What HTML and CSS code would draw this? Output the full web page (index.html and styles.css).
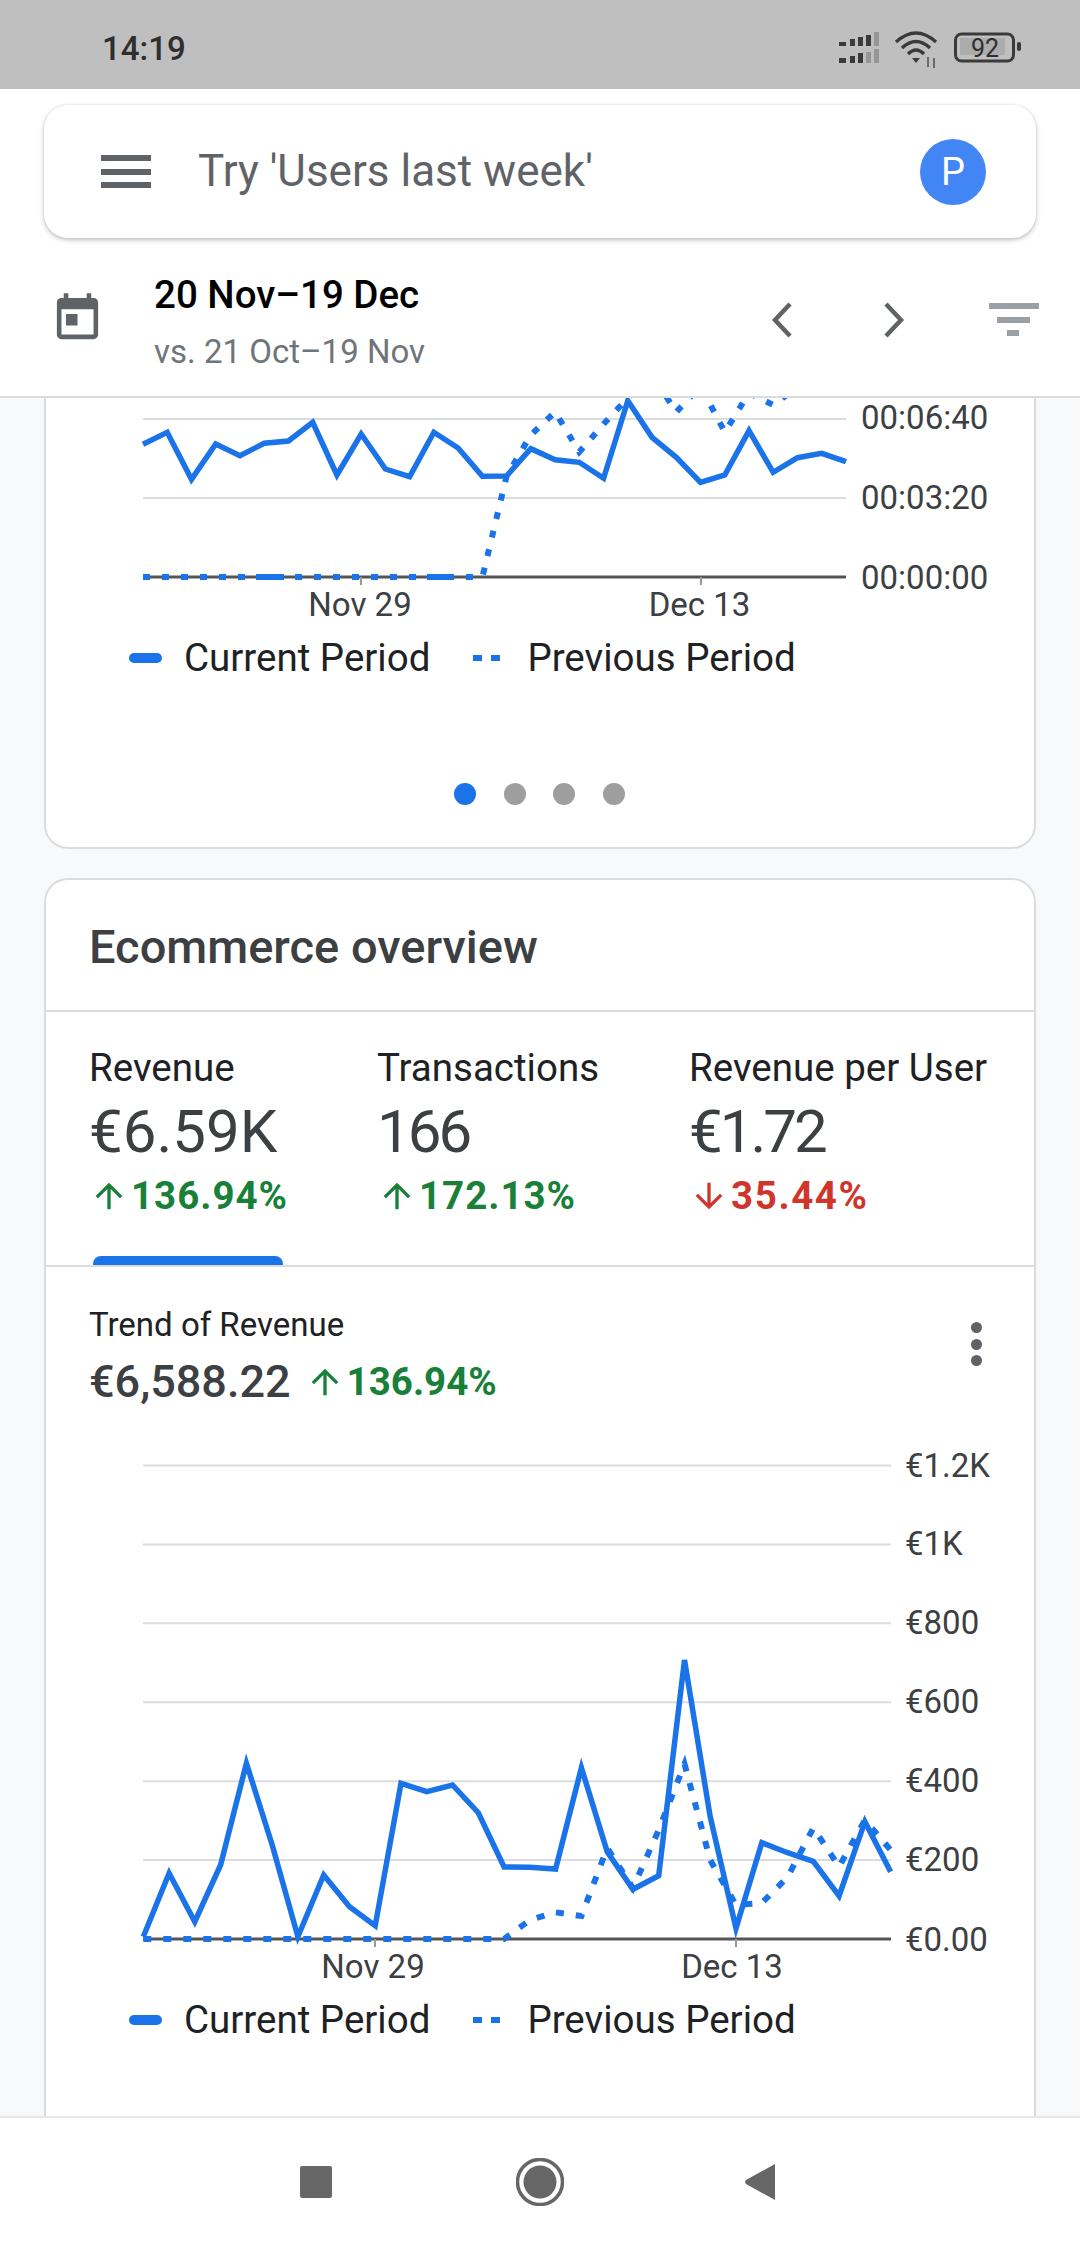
FILE: index.html
```html
<!DOCTYPE html>
<html lang="en">
<head>
<meta charset="utf-8">
<title>Analytics</title>
<link rel="stylesheet" href="styles.css">
</head>
<body>
<div class="status">
  <span class="clock">14:19</span>
  <svg class="status-icons" width="210" height="50" viewBox="830 20 210 50">
    <g fill="#3a3a3a">
      <rect x="839" y="42" width="7" height="4"/><rect x="850" y="39" width="5" height="7"/><rect x="858" y="37" width="5" height="9"/><rect x="866" y="35" width="5" height="11"/>
      <rect x="839" y="58" width="7" height="5"/><rect x="850" y="56" width="5" height="7"/><rect x="858" y="53" width="5" height="10"/>
    </g>
    <g fill="#969696">
      <rect x="874" y="32" width="5" height="14"/><rect x="866" y="52" width="5" height="11"/><rect x="874" y="49" width="5" height="14"/>
    </g>
    <g fill="none" stroke="#3a3a3a" stroke-width="3.4">
      <path d="M896 42Q916 24 936 42"/><path d="M902 48Q916 35 930 48"/><path d="M908 54Q916 46 924 54"/>
    </g>
    <path d="M912 58h8l-4 5z" fill="#3a3a3a"/>
    <path d="M928 57v10M934 58v10" stroke="#555" stroke-width="1.6"/>
    <rect x="955.500" y="34" width="58" height="27" rx="6" fill="none" stroke="#3a3a3a" stroke-width="3"/>
    <rect x="960" y="38" width="45" height="17" fill="#acacac"/>
    <rect x="1017" y="42" width="4" height="9" rx="2" fill="#3a3a3a"/>
    <text class="bat" x="985" y="57" text-anchor="middle">92</text>
  </svg>
</div>

<header class="header">
  <div class="search">
    <span class="burger"><i></i><i></i><i></i></span>
    <span class="search-text">Try 'Users last week'</span>
    <span class="avatar">P</span>
  </div>
  <div class="date-row">
    <svg class="cal" width="55" height="55" viewBox="0 0 24 24"><path fill="#5f6368" d="M19 3h-1V1h-2v2H8V1H6v2H5c-1.110 0-1.990.9-1.990 2L3 19c0 1.100.89 2 2 2h14c1.100 0 2-.9 2-2V5c0-1.100-.9-2-2-2zm0 16H5V8h14v11zM7 10h5v5H7z"/></svg>
    <div class="dates">
      <div class="date-main">20 Nov–19 Dec</div>
      <div class="date-sub">vs. 21 Oct–19 Nov</div>
    </div>
    <svg class="chev-l" width="22" height="36" viewBox="0 0 22 36"><path d="M19 2L4 18l15 16" fill="none" stroke="#5f6368" stroke-width="4.500"/></svg>
    <svg class="chev-r" width="22" height="36" viewBox="0 0 22 36"><path d="M3 2l15 16L3 34" fill="none" stroke="#5f6368" stroke-width="4.500"/></svg>
    <svg class="filter" width="50" height="34" viewBox="0 0 50 34"><path fill="#9aa0a6" d="M0 0h50v6H0zM8 14h33v6H8zM18 27h12v6H18z"/></svg>
  </div>
</header>

<main class="main">
  <section class="card card-first">
    <svg class="chart" width="988" height="238" viewBox="46 398 988 238">
      <path class="grid" d="M143 419H846M143 498H846"/>
      <path class="axis" d="M143 577H846"/>
      <path class="tick" d="M361 577v8M701 577v8"/>
      <polyline class="cur" points="143,444.300 167.200,432.300 191.500,479.300 215.700,444 240,455.700 264.200,443.300 288.400,441 312.700,422.300 336.900,475 361.200,434 385.400,469 409.600,476.700 433.900,432.300 458.100,448 482.400,476.300 506.600,476 530.800,448.700 555.100,459.700 579.300,462.300 603.600,478.300 627.800,400.700 652,437.300 676.300,457.300 700.500,482.300 724.800,475 749,430.700 773.200,472.300 797.500,457.700 821.700,453.300 846,461.700"/>
      <polyline class="prev" points="143,577 482.400,577 506.600,476 530.800,435 555.100,412 579.300,452 603.600,424 627.800,398 652,375 676.300,412 700.500,386 724.800,432 749,393 773.200,405 797.500,387 821.700,370 846,398"/>
      <path class="solid-bit" d="M256 577h28M427 577h27"/>
      <g class="lbl">
        <text x="360" y="616" text-anchor="middle">Nov 29</text>
        <text x="699.500" y="616" text-anchor="middle">Dec 13</text>
        <text x="861" y="429">00:06:40</text>
        <text x="861" y="509">00:03:20</text>
        <text x="861" y="589">00:00:00</text>
      </g>
    </svg>
    <div class="legend">
      <span class="mark-solid"></span><span class="leg-text">Current Period</span>
      <span class="mark-dash"><i></i><i></i></span><span class="leg-text">Previous Period</span>
    </div>
    <div class="dots"><i class="on"></i><i></i><i></i><i></i></div>
  </section>

  <section class="card card-second">
    <h2 class="title">Ecommerce overview</h2>
    <div class="tabs">
      <div class="tab tab-active">
        <div class="tab-label">Revenue</div>
        <div class="tab-value tab-value-wide">€6.59K</div>
        <div class="change up"><svg class="arrow" width="40" height="40" viewBox="0 0 24 24"><path d="M4 12l1.410 1.410L11 7.830V20h2V7.830l5.580 5.590L20 12l-8-8-8 8z"/></svg>136.94%</div>
      </div>
      <div class="tab">
        <div class="tab-label">Transactions</div>
        <div class="tab-value">166</div>
        <div class="change up"><svg class="arrow" width="40" height="40" viewBox="0 0 24 24"><path d="M4 12l1.410 1.410L11 7.830V20h2V7.830l5.580 5.590L20 12l-8-8-8 8z"/></svg>172.13%</div>
      </div>
      <div class="tab">
        <div class="tab-label">Revenue per User</div>
        <div class="tab-value">€1.72</div>
        <div class="change down"><svg class="arrow" width="40" height="40" viewBox="0 0 24 24"><path d="M20 12l-1.410-1.410L13 16.170V4h-2v12.170l-5.580-5.590L4 12l8 8 8-8z"/></svg>35.44%</div>
      </div>
    </div>
    <div class="trend">
      <div>
        <div class="trend-title">Trend of Revenue</div>
        <div class="trend-row">
          <span class="trend-value">€6,588.22</span>
          <span class="change up"><svg class="arrow" width="40" height="40" viewBox="0 0 24 24"><path d="M4 12l1.410 1.410L11 7.830V20h2V7.830l5.580 5.590L20 12l-8-8-8 8z"/></svg>136.94%</span>
        </div>
      </div>
      <span class="more"><i></i><i></i><i></i></span>
    </div>
    <svg class="chart" width="988" height="588" viewBox="46 1410 988 588">
      <path class="grid" d="M143 1465.500H891M143 1544.500H891M143 1623.300H891M143 1702.300H891M143 1781.300H891M143 1860H891"/>
      <path class="axis" d="M143 1939H891"/>
      <path class="tick" d="M375 1939v8M736 1939v8"/>
      <polyline class="cur" points="143.300,1936.700 169.100,1873.300 194.800,1921.700 220.600,1865 246.400,1763.300 272.200,1845 297.900,1936.700 323.700,1875 349.500,1906.700 375.200,1925.700 401,1783.300 426.800,1791.700 452.500,1785 478.300,1812.700 504.100,1867 529.900,1867.300 555.600,1869 581.400,1767.700 607.200,1851.700 632.900,1889.300 658.700,1875.700 684.500,1660 710.200,1816.700 736,1928.300 761.800,1842.700 787.600,1852.700 813.300,1861.300 839.100,1896 864.900,1821.700 890.600,1871.700"/>
      <polyline class="prev prev2" points="143.300,1939 504.100,1939 529.900,1920 555.600,1912.300 581.400,1916 607.200,1848 632.900,1888 658.700,1830 684.500,1764 710.200,1860 736,1905 761.800,1903 787.600,1877 813.300,1828 839.100,1866.700 864.900,1820 890.600,1850"/>
      <g class="lbl">
        <text x="373" y="1978" text-anchor="middle">Nov 29</text>
        <text x="732" y="1978" text-anchor="middle">Dec 13</text>
        <text x="905" y="1477">€1.2K</text>
        <text x="905" y="1555">€1K</text>
        <text x="905" y="1634">€800</text>
        <text x="905" y="1713">€600</text>
        <text x="905" y="1792">€400</text>
        <text x="905" y="1871">€200</text>
        <text x="905" y="1951">€0.00</text>
      </g>
    </svg>
    <div class="legend">
      <span class="mark-solid"></span><span class="leg-text">Current Period</span>
      <span class="mark-dash"><i></i><i></i></span><span class="leg-text">Previous Period</span>
    </div>
  </section>
</main>

<nav class="nav">
  <svg width="48" height="48" viewBox="0 0 48 48"><rect x="6" y="8" width="32" height="32" rx="2" fill="#666"/></svg>
  <svg width="48" height="48" viewBox="0 0 48 48"><circle cx="24" cy="24" r="22.500" fill="none" stroke="#666" stroke-width="3.500"/><circle cx="24" cy="24" r="16.500" fill="#666"/></svg>
  <svg width="48" height="48" viewBox="0 0 48 48"><path d="M37 6v36L8 26a3 3 0 0 1 0-4z" fill="#666"/></svg>
</nav>
</body>
</html>
```

FILE: styles.css
```css
* { box-sizing: border-box; }
html, body { margin: 0; padding: 0; }
body {
  width: 1080px;
  height: 2246px;
  overflow: hidden;
  display: flex;
  flex-direction: column;
  background: #f8f9fa;
  font-family: Roboto, "Liberation Sans", sans-serif;
  color: #3c4043;
}

/* status bar */
.status {
  height: 89px;
  flex: none;
  background: #bfbfbf;
  display: flex;
  align-items: center;
  justify-content: space-between;
  padding: 0 40px 0 102px;
}
.clock { font-size: 33px; font-weight: 500; color: #2e2e2e; line-height: 40px; margin-top: 9px; }
.status-icons { display: block; margin-top: 1px; }
.bat { font: 400 25px Roboto, sans-serif; fill: #2e2e2e; }

/* header */
.header {
  height: 309px;
  flex: none;
  background: #fff;
  border-bottom: 2px solid #dcdcdc;
  padding-top: 16px;
  position: relative;
  z-index: 2;
}
.search {
  height: 133px;
  margin: 0 44px;
  background: #fff;
  border-radius: 24px;
  box-shadow: 0 2px 5px rgba(60,64,67,.32), 0 0 2px rgba(60,64,67,.14);
  display: flex;
  align-items: center;
  padding: 0 50px 0 57px;
}
.burger { display: flex; flex-direction: column; gap: 7.500px; width: 50px; flex: none; }
.burger i { display: block; height: 6px; background: #5f6368; }
.search-text { flex: 1; margin: -2px 0 0 47px; font-size: 44px; line-height: 52px; color: #5f6368; }
.avatar {
  width: 66px; height: 66px; border-radius: 50%;
  background: #4285f4; color: #fff;
  display: flex; align-items: center; justify-content: center;
  font-size: 38px; flex: none;
}
.date-row { height: 158px; display: flex; align-items: center; padding-left: 50px; position: relative; }
.cal { flex: none; margin-top: 2px; }
.dates { margin-left: 49px; flex: 1; margin-top: 13px; }
.date-main { font-size: 38.500px; font-weight: 500; line-height: 44px; color: #000; }
.date-sub { font-size: 33px; line-height: 44px; color: #70757a; margin-top: 13px; }
.chev-l { flex: none; margin: 5px 0 0 1px; }
.chev-r { flex: none; margin: 5px 0 0 90px; }
.filter { flex: none; margin: 5px 41px 0 84px; }

/* scrolling content */
.main { flex: 1; min-height: 0; overflow: hidden; padding: 0 44px; }
.card { background: #fff; border: 2px solid #dadce0; border-radius: 24px; }
.card-first { border-top: 0; border-radius: 0 0 24px 24px; height: 451px; padding-bottom: 41px; }
.card-second { margin-top: 29px; border-bottom: 0; padding-bottom: 100px; }
.chart { display: block; }
.grid { stroke: #dadce0; stroke-width: 2; fill: none; }
.axis { stroke: #555; stroke-width: 3; fill: none; }
.tick { stroke: #999; stroke-width: 2; fill: none; }
.cur { fill: none; stroke: #1a73e8; stroke-width: 5.500; stroke-linejoin: miter; }
.prev { fill: none; stroke: #1a73e8; stroke-width: 6; stroke-dasharray: 7 12; }
.prev2 { stroke-dasharray: 8 12; }
.solid-bit { stroke: #1a73e8; stroke-width: 6; fill: none; }
.lbl text { font-family: Roboto, sans-serif; font-size: 33px; fill: #3c4043; }

.legend { height: 44px; display: flex; align-items: center; padding-left: 83px; }
.mark-solid { width: 33px; height: 10px; border-radius: 5px; background: #1a73e8; flex: none; }
.leg-text { font-size: 38.500px; line-height: 42px; color: #202124; margin-left: 22px; }
.mark-dash { display: flex; gap: 9px; margin-left: 43px; flex: none; }
.mark-dash i { display: block; width: 9px; height: 6px; background: #1a73e8; }
.mark-dash + .leg-text { margin-left: 27px; }

.dots { display: flex; gap: 27.500px; justify-content: flex-start; margin: 103px 0 0 408px; }
.dots i { display: block; width: 22px; height: 22px; border-radius: 50%; background: #9e9e9e; }
.dots i.on { background: #1a73e8; }

/* ecommerce card */
.title {
  margin: 0;
  padding: 42px 0 38px 43px;
  font-size: 47px;
  line-height: 50px;
  font-weight: 500;
  color: #3c4043;
  border-bottom: 2px solid #dadce0;
}
.tabs {
  height: 255px;
  display: grid;
  grid-template-columns: 288px 312px 1fr;
  padding: 33px 0 0 43px;
  border-bottom: 2px solid #dadce0;
  white-space: nowrap;
}
.tab { position: relative; }
.tab-active::after {
  content: "";
  position: absolute;
  left: 4px;
  bottom: 0;
  width: 190px;
  height: 9px;
  background: #1a73e8;
  border-radius: 8px 8px 0 0;
}
.tab-label { font-size: 38.500px; line-height: 46px; color: #202124; }
.tab-value { font-size: 60px; line-height: 66px; margin-top: 8px; color: #3c4043; letter-spacing: -3px; }
.tab-value-wide { letter-spacing: 0; }
.change {
  display: flex; align-items: center;
  font-size: 38.500px; font-weight: 700; line-height: 44px; letter-spacing: 1px;
}
.tabs .change { margin-top: 9px; }
.trend-row .change { letter-spacing: 0; }
.up { color: #188038; }
.down { color: #d0352b; letter-spacing: 1.600px; }
.arrow { flex: none; fill: currentColor; margin-right: 2px; }
.trend { display: flex; justify-content: space-between; padding: 38px 0 0 43px; height: 143px; }
.trend-title { font-size: 33px; line-height: 40px; color: #202124; }
.trend-row { display: flex; align-items: center; margin-top: 12px; height: 50px; }
.trend-value { font-size: 45px; font-weight: 500; line-height: 50px; color: #3c4043; margin-right: 14px; }
.more { display: flex; flex-direction: column; gap: 5.500px; margin: 17px 52px 0 0; }
.more i { display: block; width: 11px; height: 11px; border-radius: 50%; background: #5f6368; }

/* nav bar */
.nav {
  height: 130px;
  flex: none;
  background: #fff;
  border-top: 2px solid #e8e8e8;
  display: flex;
  align-items: center;
  justify-content: center;
  gap: 174px;
  position: relative;
  z-index: 2;
}
```
